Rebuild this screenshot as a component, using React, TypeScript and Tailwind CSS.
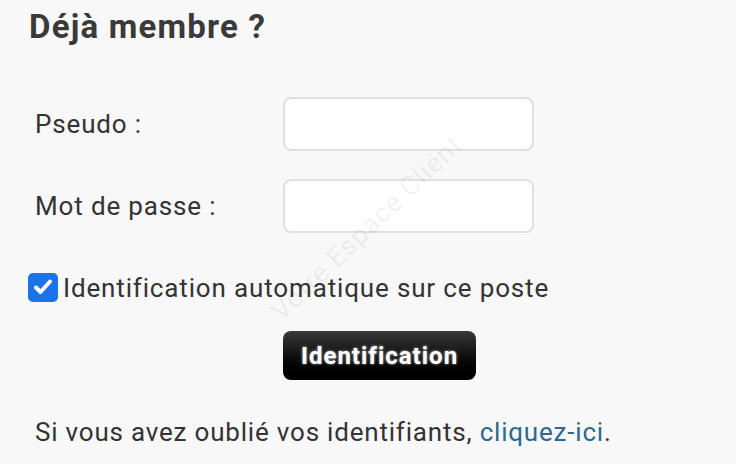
import React from 'react';

const App: React.FC = () => {
    return (
        <div className="relative w-[736px] h-[464px] overflow-hidden bg-[#f8f8f8] text-[#333] font-['Roboto',sans-serif]">
            <div className="pt-[6px] pl-[29px]">
                <h2 className="text-[33px] leading-[42px] font-bold tracking-[1.2px] text-[#3a3a3a]">Déjà membre ?</h2>
            </div>

            <div className="mt-[49px] flex flex-col gap-[28px] pl-[35px]">
                <div className="flex items-center">
                    <label className="w-[248px] text-[26px] leading-[28px] tracking-[0.85px]">Pseudo :</label>
                    <input type="text" className="w-[251px] h-[54px] rounded-[8px] border-2 border-[#e0e0e0] bg-white" />
                </div>
                <div className="flex items-center">
                    <label className="w-[248px] text-[26px] leading-[28px] tracking-[0.85px]">Mot de passe :</label>
                    <input type="password" className="w-[251px] h-[54px] rounded-[8px] border-2 border-[#e0e0e0] bg-white" />
                </div>
            </div>

            <div className="mt-[39px] flex items-center pl-[28px] gap-[5px]">
                <span className="flex items-center justify-center w-[30px] h-[29px] rounded-[5px] bg-[#1a73e8]">
                    <svg viewBox="0 0 24 24" className="w-[24px] h-[24px]" fill="none" stroke="white" strokeWidth="4" strokeLinecap="round" strokeLinejoin="round">
                        <path d="M5 12.5l4.5 4.5L19 6.5" />
                    </svg>
                </span>
                <span className="text-[26px] leading-[30px] tracking-[0.85px] relative top-[1px]">Identification automatique sur ce poste</span>
            </div>

            <div className="mt-[29px] pl-[283px]">
                <button className="w-[193px] h-[49px] rounded-[8px] bg-gradient-to-b from-[#3a3a3a] via-[#111] to-[#000] text-white text-[24px] font-bold tracking-[1px] [text-shadow:0_0_3px_rgba(255,255,255,0.7)]">
                    Identification
                </button>
            </div>

            <p className="mt-[37px] pl-[35px] text-[26px] leading-[30px] tracking-[0.8px]">
                Si vous avez oublié vos identifiants, <a className="text-[#2a6a90]">cliquez-ici</a>.
            </p>

            <div className="pointer-events-none absolute left-[367px] top-[228px] -translate-x-1/2 -translate-y-1/2 -rotate-[44deg] whitespace-nowrap text-[27px] tracking-[1px] text-[#000]/[0.06]">
                Votre Espace Client
            </div>
        </div>
    );
};

export default App;
